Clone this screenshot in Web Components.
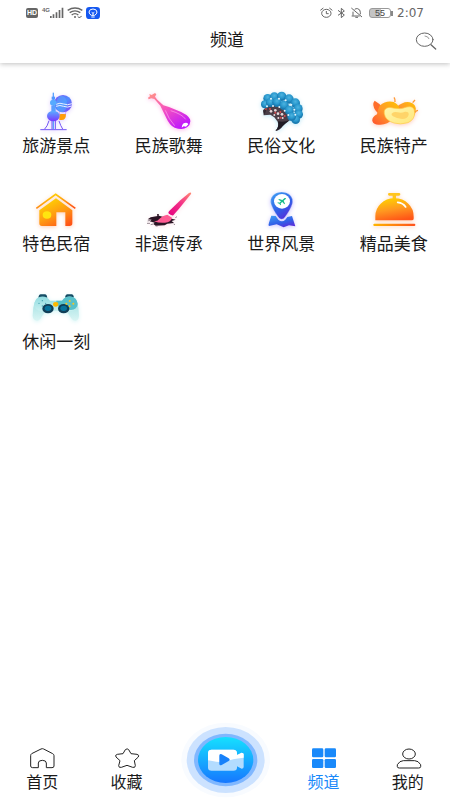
<!DOCTYPE html>
<html lang="zh-CN">
<head>
  <meta charset="UTF-8">
  <meta name="viewport" content="width=device-width, initial-scale=1.0">
  <title>频道</title>
  <style>
    body {
      margin: 0;
      background: #fff;
      color: #1a1a1a;
      font-family: "Liberation Sans", "Noto Sans CJK SC", sans-serif;
    }
  </style>
</head>
<body>
  <channel-page></channel-page>

  <script>
    // every icon is drawn at three units per pixel
    const ICONS = {
      signal: {
        box: "150 18 42 42",
        body: `<g fill="#666"><path d="M150 48h5v6h-5zM158 43h5v11h-5zM167 37h5v17h-5zM176 30h5v24h-5zM185 23h5v31h-5z"/></g>`,
      },
      wifi: {
        box: "201 18 48 42",
        body: `<g fill="none" stroke="#666" stroke-width="4"><path d="M203 31q22-14 44 0M209 38q16-11 32 0M215 45q10-8 20 0"/></g>
          <circle cx="225" cy="51" r="3" fill="#666"/><path d="M233 49l4 4 8-4" fill="none" stroke="#666" stroke-width="3"/>`,
      },
      bulb: {
        box: "258 18 42 42",
        body: `<rect x="258" y="21" width="42" height="36" rx="10" fill="#1558f0"/>
          <g fill="none" stroke="#fff" stroke-width="3"><path d="M274 46q-7-4-7-10 1-9 12-9t12 9q0 6-7 10zM274 51h10M275 37l4 3 4-3M279 40v6"/></g>`,
      },
      alarm: {
        box: "285 18 39 42",
        body: `<g fill="none" stroke="#666" stroke-width="3"><ellipse cx="304" cy="40" rx="14" ry="12"/><path d="M304 33v8h7M286 31l9-7M322 31l-9-7"/></g>`,
      },
      bluetooth: {
        box: "336 18 27 42",
        body: `<path d="M339 31l19 14-9 8V25l9 8-19 13" fill="none" stroke="#666" stroke-width="3"/>`,
      },
      bell: {
        box: "375 18 42 42",
        body: `<g fill="none" stroke="#666" stroke-width="3"><path d="M379 24l32 27M380 48h24M384 47V35M389 28q4-3 9-2 8 2 8 11v6M391 52h8"/></g>`,
      },
      search: {
        box: "568 92 72 60",
        body: `<g fill="none" stroke="#666" stroke-width="3" stroke-linecap="round"><ellipse cx="600" cy="118" rx="25" ry="20"/><path d="M619 133l14 13" stroke-width="4"/><path d="M601 107q10 1 12 8" stroke-width="2"/></g>`,
      },
      travel: {
        box: "55 27 168 135",
        glow: "#e0d0ff",
        body: `<defs>
            <linearGradient id="a" x2="0" y2="1"><stop stop-color="#59b0ff"/><stop offset="1" stop-color="#7a35ff"/></linearGradient>
            <linearGradient id="b" x2="1" y2="1"><stop stop-color="#8149f5"/><stop offset=".5" stop-color="#4f8cff"/><stop offset="1" stop-color="#8a3ff5"/></linearGradient>
          </defs>
          <ellipse cx="160" cy="71" rx="27" ry="26" fill="url(#b)"/>
          <ellipse cx="156" cy="72" rx="16" ry="25" fill="#54a6ff" opacity=".6"/>
          <g fill="none" stroke="#e8f0ff" stroke-width="3"><path d="M139 73q12-6 23-1t25-1M139 79q12-5 23 0t24-1"/></g>
          <path d="M149 102h20q0 18-13 18h-7z" fill="#ff9d0a"/><path d="M148 96l3 9M169 94l-3 10" stroke="#bc83ff" stroke-width="2"/>
          <path d="M131 38v109" stroke="#59a3ff" stroke-width="4"/>
          <ellipse cx="131" cy="68" rx="10" ry="9" fill="#56aaff"/><path d="M126 50h10v9h-10z" fill="#4e96ff"/>
          <path d="M125 77h13v18h-13z" fill="#599eff"/>
          <ellipse cx="131" cy="108" rx="19" ry="16" fill="url(#a)"/>
          <path d="M127 123v24M137 122v25M118 122q-5 18-13 25M148 123q5 15 11 24M92 149h79" fill="none" stroke="#7254f5" stroke-width="3"/>`,
      },
      music: {
        box: "62 27 168 135",
        glow: "#ffb8ea",
        body: `<defs><linearGradient id="a" x1=".1" y1="0" x2=".75" y2="1"><stop stop-color="#ff9088"/><stop offset=".45" stop-color="#f653bd"/><stop offset="1" stop-color="#bd16ff"/></linearGradient></defs>
          <path d="M87 42l7 3 10-6 4 4-4 7 7 9 18 17q22 6 37 13 38 14 43 29 4 14-9 24-14 10-37 1-15-6-25-29l-18-37-18-20-9-2-8 3-2-5 6-4z" fill="url(#a)"/>
          <path d="M135 91q9 25 28 46M151 92q34 10 45 26" fill="none" stroke="#ffa8f0" stroke-width="3" opacity=".65"/>
          <path d="M190 130q10-4 14 3l-7 7-7-1-6 4q-1-7 6-13z" fill="#fff"/>`,
      },
      opera: {
        box: "55 27 168 135",
        glow: "#bfe8f7",
        body: `<defs><radialGradient id="p" cy=".35"><stop stop-color="#4db4e0"/><stop offset=".7" stop-color="#2796cc"/><stop offset="1" stop-color="#1b7cb2"/></radialGradient></defs>
          <path d="M85 91q18-24 47-16 31 10 39 38-12 15-28 18 3 13-17 22l-4-2q13-10 7-26l-10-13-12-8-20 2z" fill="#4a3f48"/>
          <g fill="url(#p)">
            <circle cx="99" cy="55" r="13"/><circle cx="119" cy="51" r="14"/><circle cx="141" cy="49" r="14"/><circle cx="163" cy="57" r="14"/><circle cx="182" cy="69" r="14"/><circle cx="190" cy="86" r="14"/><circle cx="192" cy="103" r="13"/><circle cx="183" cy="119" r="13"/>
            <circle cx="91" cy="73" r="12"/><circle cx="107" cy="68" r="13"/><circle cx="127" cy="67" r="14"/><circle cx="148" cy="76" r="14"/><circle cx="164" cy="91" r="14"/><circle cx="171" cy="110" r="13"/>
          </g>
          <g fill="#e4f5fc"><circle cx="109" cy="56" r="3"/><circle cx="133" cy="56" r="3"/><circle cx="153" cy="61" r="3"/><circle cx="170" cy="74" r="3"/><circle cx="179" cy="89" r="3"/><circle cx="182" cy="104" r="3"/><circle cx="97" cy="79" r="3"/><circle cx="115" cy="78" r="3"/><circle cx="134" cy="81" r="3"/><circle cx="150" cy="92" r="3"/><circle cx="161" cy="105" r="3"/></g>
          <g fill="#e6d8db"><circle cx="109" cy="94" r="4"/><circle cx="122" cy="91" r="4"/><circle cx="130" cy="101" r="4"/><circle cx="119" cy="105" r="3"/><circle cx="142" cy="103" r="4"/><circle cx="144" cy="114" r="3"/><circle cx="131" cy="114" r="3"/></g>
          <g fill="#d9484c"><circle cx="94" cy="88" r="3"/><circle cx="106" cy="87" r="3"/><circle cx="122" cy="98" r="3"/><circle cx="137" cy="96" r="3"/><circle cx="138" cy="113" r="3"/><circle cx="150" cy="108" r="3"/></g>
          <path d="M86 92l10-4-7 16z" fill="#302730"/><path d="M130 124q18 4 36-4-16 12-25 22-8 8-18 10 11-11 7-28z" fill="#1f1b25"/>`,
      },
      mango: {
        box: "62 27 168 135",
        glow: "#ffcdbd",
        body: `<defs>
            <linearGradient id="a" x1="1" x2="0" y2="1"><stop stop-color="#ffc400"/><stop offset=".5" stop-color="#ff982b"/><stop offset="1" stop-color="#ff512e"/></linearGradient>
            <linearGradient id="b" x2="1" y2="1"><stop stop-color="#fff6b0"/><stop offset="1" stop-color="#ffe678"/></linearGradient>
          </defs>
          <path d="M88 62q14 8 20 17l-7 22q-14-8-17-25-1-9 4-14z" fill="#ff6c29"/>
          <path d="M152 83q22-20 41-16 22 5 18 28-6 28-35 25z" fill="url(#a)"/>
          <path d="M103 77q20-17 42-11 13 6 17 18 1 24-19 33-16 17-38 17-20 2-24-11-2-12 14-20 2-14 8-26z" fill="url(#a)"/>
          <path d="M118 90q6-12 29-5 21 4 38-4 22-5 23 17 0 21-20 30-24 7-42 1-26-8-29-28-1-6 1-11z" fill="url(#b)" stroke="#ffc94a" stroke-width="2"/>
          <path d="M139 101q5-8 18-4 12 3 22-2 13-1 11 10-4 12-19 12-15 0-28-8-6-4-4-8z" fill="#ffd469"/>
          <path d="M149 66q1-9-3-14M202 68l7-8M209 97q3-5 9-6" fill="none" stroke="#ff9b36" stroke-width="4"/>`,
      },
      house: {
        box: "55 21 168 135",
        glow: "#ffcdb3",
        body: `<defs><linearGradient id="a" x1=".2" x2=".8" y2="1"><stop stop-color="#ffd900"/><stop offset=".55" stop-color="#ff9a12"/><stop offset="1" stop-color="#ff5416"/></linearGradient></defs>
          <path d="M80 85l58-42 59 42" fill="none" stroke="url(#a)" stroke-width="5"/>
          <path d="M139 55l49 36v39q0 8-8 8h-13V97h-27v41H97q-8 0-8-8V91z" fill="url(#a)"/>
          <ellipse cx="112" cy="105" rx="13" ry="11" fill="#ffe510"/>`,
      },
      brush: {
        box: "62 21 168 135",
        glow: "#ffe2ea",
        body: `<defs><linearGradient id="a" x1="1" x2="0" y2="1"><stop stop-color="#ff8b72"/><stop offset=".45" stop-color="#f43388"/><stop offset="1" stop-color="#e4007f"/></linearGradient></defs>
          <path d="M91 112l25-5 11 3 14-2 8 7 17 4-12 4 7 6-20 2-8 5-27 1-7-5 4-4-15-4 6-5-12-1z" fill="#2b1525"/>
          <path d="M82 123l7-2M80 130h9M91 134l8-2M110 104l4 1M165 113l5-3M160 132l4 2M106 138h6" stroke="#61535d" stroke-width="2"/>
          <path d="M206 39q8-4 6 3l-36 44-17 20q-5 2-14-5-2-3 1-7l34-33z" fill="url(#a)"/>
          <path d="M141 104l14 9q-3 13-21 15-16 2-33-4l10-2q15-16 30-18z" fill="#ff5b93"/>
          <path d="M143 101l16 11" stroke="#ffe2ee" stroke-width="3"/><circle cx="113" cy="105" r="3" fill="#2b1525"/>`,
      },
      place: {
        box: "55 21 168 135",
        glow: "#ccc4ff",
        body: `<defs><linearGradient id="a" x2=".6" y2="1"><stop stop-color="#3ea1f4"/><stop offset=".65" stop-color="#315de7"/><stop offset="1" stop-color="#5630db"/></linearGradient></defs>
          <path d="M110 107l13 1 8 11q11 9 21 0l6-8 14-3 10 31-19-3-16 6-21-9-23 5q-3-2 0-10z" fill="url(#a)"/>
          <path d="M141 36q17 0 27 11 9 10 5 25-5 17-22 40-4 6-10 6t-10-6q-17-23-22-40-4-15 5-25 10-11 27-11z" fill="url(#a)" stroke="#fff" stroke-width="1"/>
          <ellipse cx="142" cy="64" rx="24" ry="22" fill="#fff"/>
          <path d="M153 54l-3 0-7 6-10-3-2 2 8 5-5 4-4-1-2 2 6 2 3 5 2-2-1-4 5-4 6 7 2-2-4-9 7-6z" fill="#18bb8b"/>`,
      },
      cloche: {
        box: "395 21 168 135",
        glow: "#ffd0b5",
        body: `<defs><linearGradient id="a" x1=".3" x2=".6" y2="1"><stop stop-color="#ffd000"/><stop offset=".5" stop-color="#ff9820"/><stop offset="1" stop-color="#ff5517"/></linearGradient>
          <linearGradient id="b"><stop stop-color="#ffb600"/><stop offset="1" stop-color="#ff511d"/></linearGradient></defs>
          <path d="M465 39h29q4 0 4 4t-4 4h-9v11h-10V47h-10q-4 0-4-4t4-4z" fill="#ffc51e"/>
          <path d="M423 121v-12q0-23 16-38 17-16 41-16 26 0 42 16 16 15 16 39v6q0 5-6 5z" fill="url(#a)"/>
          <rect x="417" y="131" width="126" height="7" rx="3" fill="url(#b)"/>
          <path d="M490 67q17 2 24 14" fill="none" stroke="#fff" stroke-width="5" stroke-linecap="round"/>`,
      },
      gamepad: {
        box: "55 17 168 135",
        glow: "#d6f5f6",
        body: `<defs>
            <linearGradient id="a" x2="0" y2="1"><stop stop-color="#8edbe0"/><stop offset="1" stop-color="#c9f0f0"/></linearGradient>
            <linearGradient id="b" x2="0" y2="1"><stop stop-color="#a5e2e4"/><stop offset="1" stop-color="#daf5f4"/></linearGradient>
          </defs>
          <path d="M86 55q2-10 7-10h13q5 0 7 10zM166 55q2-10 7-10h13q5 0 7 10z" fill="#164d65"/>
          <path d="M75 68q-6 17-6 41 1 14 13 15 8 0 14-12l13-19h60l13 19q7 13 16 12 9-1 10-15 0-24-6-41z" fill="url(#b)"/>
          <path d="M93 52q17-3 28 12h36q12-15 28-12 17 3 19 22-1 18-20 21H94q-20-3-20-21 2-19 19-22z" fill="url(#a)"/>
          <path d="M140 64h17q12-15 28-12 17 3 19 22-1 17-20 18-23 0-44-15z" fill="#57c0ca"/>
          <g fill="#103f58"><ellipse cx="115" cy="88" rx="17" ry="14"/><ellipse cx="162" cy="88" rx="17" ry="14"/></g>
          <g fill="#08739c"><ellipse cx="115" cy="87" rx="10" ry="8"/><ellipse cx="162" cy="87" rx="10" ry="8"/></g>
          <ellipse cx="138" cy="75" rx="8" ry="7" fill="#ffb900"/>
          <g fill="#ffc51b"><circle cx="180" cy="65" r="3"/><circle cx="170" cy="73" r="3"/><circle cx="191" cy="73" r="3"/><circle cx="180" cy="81" r="3"/></g>
          <g fill="#429fae"><circle cx="98" cy="64" r="2"/><circle cx="88" cy="72" r="2"/><circle cx="108" cy="72" r="2"/><circle cx="98" cy="80" r="2"/></g>`,
      },
      home: {
        box: "84 96 84 72",
        body: `<path d="M95 116l28-14q4-2 8 0l27 14q4 2 4 6v31q0 5-6 5h-17v-14q0-8-12-8t-12 8v14H98q-6 0-6-5v-31q0-4 3-6z" fill="none" stroke="#222" stroke-width="3"/>`,
      },
      star: {
        box: "338 96 84 72",
        body: `<path d="M375 104q6-5 10 0l7 12 18 2q8 2 4 8l-12 11 3 15q0 7-8 5l-17-6-17 6q-8 2-8-5l4-15-12-11q-4-6 4-8l17-2z" fill="none" stroke="#222" stroke-width="3"/>`,
      },
      grid: {
        box: "252 96 84 72",
        body: `<g fill="#1989fa"><rect x="261" y="100" width="34" height="27" rx="4"/><rect x="299" y="100" width="34" height="27" rx="4"/><rect x="261" y="132" width="34" height="27" rx="4"/><rect x="299" y="132" width="34" height="27" rx="4"/></g>`,
      },
      user: {
        box: "507 96 84 72",
        body: `<g fill="none" stroke="#222" stroke-width="3"><ellipse cx="552" cy="117" rx="19" ry="15"/><path d="M535 137h34q11 0 18 12v6q0 4-6 4h-58q-6 0-6-4v-6q7-12 18-12z"/></g>`,
      },
      camera: {
        box: "-137 -117 270 231",
        body: `<defs><linearGradient id="a" x2="0" y2="1"><stop stop-color="#16e0ff"/><stop offset="1" stop-color="#1677ff"/></linearGradient></defs>
          <ellipse rx="133" ry="112" fill="#f8fbff"/><ellipse rx="117" ry="99" fill="#cce2ff"/><ellipse rx="95" ry="79" fill="#80b7ff"/><ellipse rx="83" ry="69" fill="url(#a)"/>
          <path d="M-42-31h65q11 0 11 11v5l14-7q6 0 6 5v38q0 5-6 5l-14-7v4q0 9-11 9h-65q-11 0-11-9v-44q0-10 11-10z" fill="#b3dcff"/>
          <path d="M-42-31h65q11 0 11 11v5l14-7q6 0 6 5v10Q16-3 5 4T-53 1v-22q0-10 11-10z" fill="#fff"/>
          <path d="M-19-13q0-7 7-4l21 12q6 4 0 8l-21 12q-7 3-7-4z" fill="#1781fa"/>`,
      },
    };

    class AppIcon extends HTMLElement {
      constructor() {
        super();
        this.shadowDOM = this.attachShadow({ mode: "open" });
      }

      connectedCallback() {
        const icon = ICONS[this.getAttribute("name")];
        const [, , width, height] = icon.box.split(" ").map(Number);
        const shadow = icon.glow ? `filter: drop-shadow(0 1px 2px ${icon.glow});` : "";
        this.shadowDOM.innerHTML = `
          <style>
            :host {
              display: block;
              flex: none;
            }
            svg {
              display: block;
              ${shadow}
            }
          </style>
          <svg width="${width / 3}" height="${height / 3}" viewBox="${icon.box}" aria-hidden="true">${icon.body}</svg>
        `;
      }
    }

    class StatusBar extends HTMLElement {
      constructor() {
        super();
        this.shadowDOM = this.attachShadow({ mode: "open" });
        this.shadowDOM.innerHTML = `
          <style>
            :host {
              display: flex;
              justify-content: space-between;
              align-items: center;
              height: 26px;
              padding: 0 26px;
              color: #666;
            }
            .side {
              display: flex;
              align-items: center;
              gap: 4px;
            }
            .network {
              gap: 3px;
            }
            .hd {
              width: 12px;
              margin-right: 1px;
              border-radius: 2px;
              background: #666;
              color: #fff;
              font-size: 7px;
              font-weight: bold;
              line-height: 10px;
              text-align: center;
            }
            .cell {
              display: flex;
              align-items: flex-start;
            }
            .net {
              font-size: 6px;
              font-weight: bold;
              line-height: 8px;
            }
            .battery {
              box-sizing: border-box;
              width: 22px;
              margin-left: 1px;
              border: 1px solid #999;
              border-radius: 3px;
              background: linear-gradient(90deg, #c4c4c4 55%, #fff 55%);
              color: #444;
              font-size: 9px;
              line-height: 8px;
              text-align: center;
            }
            .tip {
              width: 2px;
              height: 5px;
              margin-left: -4px;
              background: #888;
            }
            .time {
              font-family: "DejaVu Sans", sans-serif;
              font-size: 12px;
              line-height: 16px;
            }
          </style>
          <div class="side network">
            <span class="hd">HD</span>
            <span class="cell"><span class="net">4G</span><app-icon name="signal"></app-icon></span>
            <app-icon name="wifi"></app-icon>
            <app-icon name="bulb"></app-icon>
          </div>
          <div class="side">
            <app-icon name="alarm"></app-icon>
            <app-icon name="bluetooth"></app-icon>
            <app-icon name="bell"></app-icon>
            <span class="battery">55</span><span class="tip"></span>
            <span class="time">2:07</span>
          </div>
        `;
      }
    }

    class PageHeader extends HTMLElement {
      constructor() {
        super();
        this.shadowDOM = this.attachShadow({ mode: "open" });
        this.shadowDOM.innerHTML = `
          <style>
            :host {
              display: block;
              background: #fff;
              box-shadow: 0 1px 5px rgba(0, 0, 0, 0.25);
            }
            .bar {
              display: grid;
              grid-template-columns: 1fr auto 1fr;
              align-items: center;
              padding: 0 12px 7px 16px;
            }
            h1 {
              grid-column: 2;
              margin: 0;
              font-size: 17px;
              font-weight: normal;
              line-height: 30px;
            }
            button {
              justify-self: end;
              padding: 0;
              border: 0;
              background: none;
            }
          </style>
          <status-bar></status-bar>
          <div class="bar">
            <h1><slot></slot></h1>
            <button type="button" aria-label="搜索"><app-icon name="search"></app-icon></button>
          </div>
        `;
      }
    }

    class ChannelItem extends HTMLElement {
      constructor() {
        super();
        this.shadowDOM = this.attachShadow({ mode: "open" });
      }

      connectedCallback() {
        this.shadowDOM.innerHTML = `
          <style>
            :host {
              display: block;
            }
            a {
              display: flex;
              flex-direction: column;
              align-items: center;
              color: inherit;
              font-size: 17px;
              line-height: 26px;
              text-decoration: none;
            }
          </style>
          <a href="#${this.getAttribute("icon")}">
            <app-icon name="${this.getAttribute("icon")}"></app-icon>
            <slot></slot>
          </a>
        `;
      }
    }

    class TabItem extends HTMLElement {
      constructor() {
        super();
        this.shadowDOM = this.attachShadow({ mode: "open" });
      }

      connectedCallback() {
        this.shadowDOM.innerHTML = `
          <style>
            :host {
              display: block;
            }
            :host([active]) {
              color: #1989fa;
            }
            button {
              display: flex;
              flex-direction: column;
              align-items: center;
              width: 100%;
              padding: 0;
              border: 0;
              background: none;
              color: inherit;
              font: inherit;
              font-size: 16px;
              line-height: 22px;
            }
            .label {
              padding: 1px 0 6px;
            }
            :host([round]) .label {
              display: none;
            }
            :host([round]) button {
              padding-bottom: 2px;
            }
          </style>
          <button type="button" aria-label="${this.getAttribute("label") || this.textContent}">
            <app-icon name="${this.getAttribute("icon")}"></app-icon>
            <span class="label"><slot></slot></span>
          </button>
        `;
      }
    }

    class TabBar extends HTMLElement {
      constructor() {
        super();
        this.shadowDOM = this.attachShadow({ mode: "open" });
        this.shadowDOM.innerHTML = `
          <style>
            :host {
              display: block;
            }
            nav {
              display: grid;
              grid-template-columns: 3fr 3fr 4fr 3fr 3fr;
              align-items: end;
            }
          </style>
          <nav><slot></slot></nav>
        `;
      }
    }

    class ChannelPage extends HTMLElement {
      constructor() {
        super();
        this.shadowDOM = this.attachShadow({ mode: "open" });
        this.shadowDOM.innerHTML = `
          <style>
            :host {
              display: flex;
              flex-direction: column;
              min-height: 100vh;
            }
            main {
              flex: 1;
              display: grid;
              grid-template-columns: repeat(4, 1fr);
              align-content: start;
              row-gap: 27px;
              padding: 26px 0;
            }
          </style>
          <page-header>频道</page-header>
          <main>
            <channel-item icon="travel">旅游景点</channel-item>
            <channel-item icon="music">民族歌舞</channel-item>
            <channel-item icon="opera">民俗文化</channel-item>
            <channel-item icon="mango">民族特产</channel-item>
            <channel-item icon="house">特色民宿</channel-item>
            <channel-item icon="brush">非遗传承</channel-item>
            <channel-item icon="place">世界风景</channel-item>
            <channel-item icon="cloche">精品美食</channel-item>
            <channel-item icon="gamepad">休闲一刻</channel-item>
          </main>
          <tab-bar>
            <tab-item icon="home">首页</tab-item>
            <tab-item icon="star">收藏</tab-item>
            <tab-item icon="camera" label="视频" round></tab-item>
            <tab-item icon="grid" active>频道</tab-item>
            <tab-item icon="user">我的</tab-item>
          </tab-bar>
        `;
      }
    }

    customElements.define("app-icon", AppIcon);
    customElements.define("status-bar", StatusBar);
    customElements.define("page-header", PageHeader);
    customElements.define("channel-item", ChannelItem);
    customElements.define("tab-item", TabItem);
    customElements.define("tab-bar", TabBar);
    customElements.define("channel-page", ChannelPage);
  </script>
</body>
</html>
